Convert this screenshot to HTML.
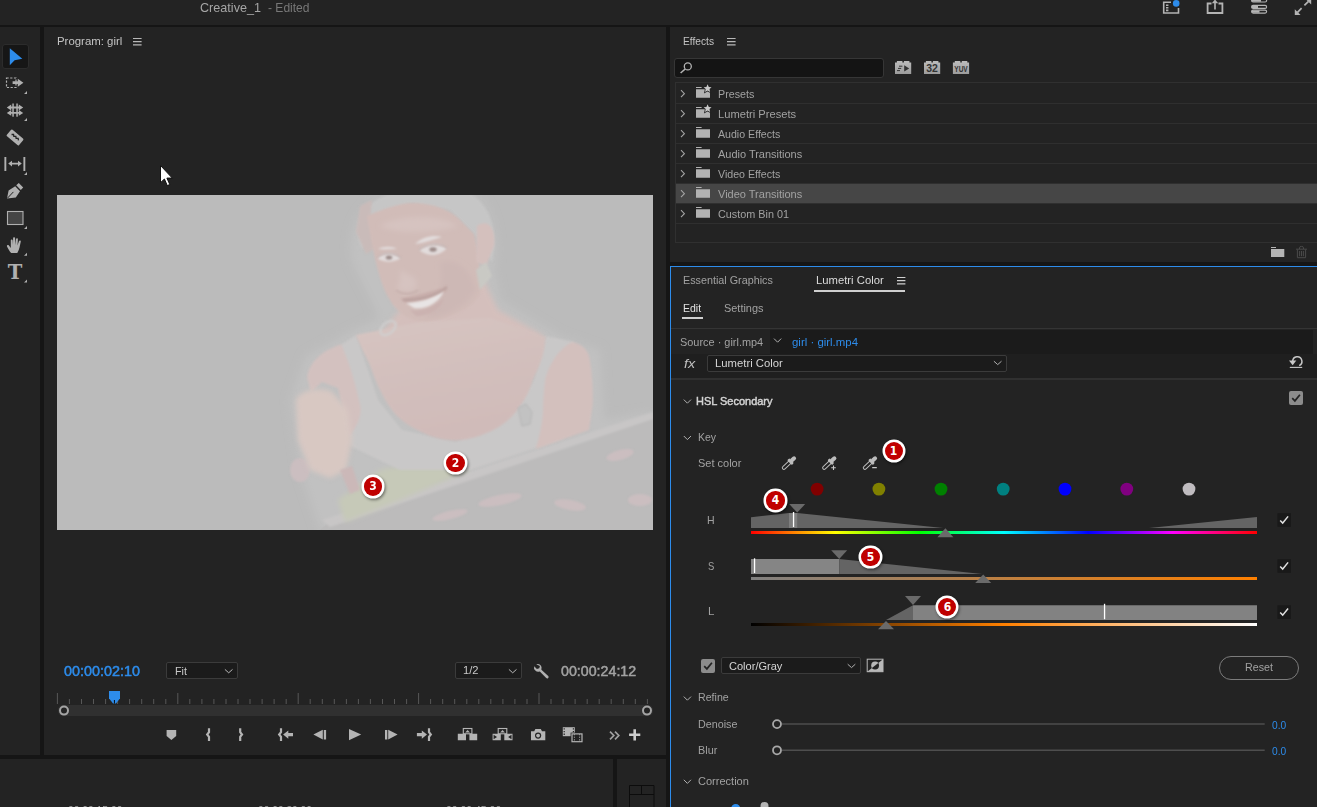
<!DOCTYPE html>
<html lang="en"><head><meta charset="utf-8"><title>Premiere Pro - Lumetri Color</title>
<style>
html,body{margin:0;padding:0;background:#232323;}
body{width:1317px;height:807px;overflow:hidden;font-family:"Liberation Sans",sans-serif;}
#app{position:relative;width:1317px;height:807px;overflow:hidden;background:#232323;}
#app div,#app svg{position:absolute;}
.t{position:absolute;line-height:1;white-space:nowrap;transform-origin:0 50%;display:block;}
.dk{background:#151515;}
.row{left:676px;width:641px;height:1px;background:#2f2f2f;}
.chk{width:14px;height:14px;border-radius:2px;background:#8c8c8c;}
.chk2{width:14px;height:14px;background:#191919;}
.dd{background:#1b1b1b;border:1px solid #3b3b3b;border-radius:2px;box-sizing:border-box;}
.badge{width:18.200px;height:18.200px;border-radius:50%;background:#c00000;margin:-9.100px 0 0 -9.100px;color:#fff;font-weight:bold;font-family:"DejaVu Sans Condensed","DejaVu Sans",sans-serif;font-size:12px;line-height:18px;text-align:center;box-shadow:0 0 0 2.500px #fff,1px 1.500px 3px 2.500px rgba(0,0,0,.45);}
.dot{width:13px;height:13px;border-radius:50%;top:482.5px;}

</style></head>
<body>
<div id="app">
<!-- structural dividers -->
<div class="dk" style="left:0;top:25px;width:1317px;height:2px"></div>
<div class="dk" style="left:40px;top:27px;width:4px;height:730px"></div>
<div class="dk" style="left:666px;top:27px;width:4px;height:780px"></div>
<div class="dk" style="left:0;top:755px;width:670px;height:4px"></div>
<div class="dk" style="left:613px;top:759px;width:4px;height:48px"></div>
<div class="dk" style="left:670px;top:262px;width:647px;height:4px"></div>
<!-- lumetri active border -->
<div style="left:670px;top:266px;width:647px;height:1px;background:#2d8ceb"></div>
<div style="left:670px;top:266px;width:1px;height:541px;background:#2d8ceb"></div>
<!-- ===== top bar icons ===== -->
<svg style="left:1160px;top:0" width="157" height="25" viewBox="1160 0 157 25">
  <g fill="none" stroke="#b4b4b4" stroke-width="1.600">
    <path d="M1171 2.200H1163.700V13H1178.500V8"/>
    <path d="M1166 5.2h2.4M1166 7.8h2.4M1166 10.4h2.4" stroke-width="1.6"/>
    <path d="M1211.500 3.500H1207.600V13H1222.400V3.500H1218.500" stroke-width="1.800"/>
    <path d="M1215 9.5V1" stroke-width="1.6"/>
  </g>
  <path d="M1211.8 3.2L1215 -0.5L1218.2 3.2Z" fill="#b4b4b4"/>
  <circle cx="1176.2" cy="3.4" r="3.3" fill="#2d8ceb"/>
  <g fill="none" stroke="#b4b4b4" stroke-width="1.2">
    <rect x="1251.6" y="-1" width="15" height="3" rx="1.5"/>
    <rect x="1251.600" y="5.400" width="15" height="3" rx="1.500"/>
    <rect x="1251.600" y="10.100" width="15" height="3" rx="1.500"/>
  </g>
  <path d="M1252 0.500h9M1252 6.900h6M1252 11.600h7.500" stroke="#b4b4b4" stroke-width="2.400"/>
  <path d="M1297.500 12.300L1301.600 8.200M1304.400 5.400L1308.500 1.300" stroke="#b4b4b4" stroke-width="1.700"/>
  <path d="M1294.8 15V9.2L1300.6 15ZM1311.2 -1.2V4.6L1305.4 -1.2Z" fill="#b4b4b4"/>
</svg>
<!-- ===== effects panel ===== -->
<svg style="left:133px;top:37px" width="9" height="9"><path d="M0 1.5h8.6M0 4.7h8.6M0 7.9h8.6" stroke="#b8b8b8" stroke-width="1.2"/></svg>
<svg style="left:726.6px;top:37px" width="9" height="9"><path d="M0 1.5h8.6M0 4.7h8.6M0 7.9h8.6" stroke="#b8b8b8" stroke-width="1.2"/></svg>
<div style="left:674px;top:58px;width:210px;height:20px;box-sizing:border-box;background:#141414;border:1px solid #363636;border-radius:3px"></div>
<svg style="left:678px;top:60px" width="16" height="16" viewBox="678 60 16 16"><circle cx="687.8" cy="66.4" r="3.5" fill="none" stroke="#b4b4b4" stroke-width="1.3"/><path d="M685.2 69L680.6 73" stroke="#b4b4b4" stroke-width="1.6"/></svg>
<svg style="left:892px;top:58px" width="80" height="18" viewBox="892 58 80 18">
  <defs><linearGradient id="lg" x1="0" y1="0" x2="0" y2="1"><stop offset="0" stop-color="#bcbcbc"/><stop offset="1" stop-color="#9c9c9c"/></linearGradient></defs>
  <g fill="url(#lg)">
    <path d="M895 62.6h1.9v-1.6h5.5v1.6h1.5v-1.6h5.5v1.6h1.8v11.4h-16.2z"/>
    <path d="M924 62.6h1.9v-1.6h5.5v1.6h1.5v-1.6h5.5v1.6h1.8v11.4h-16.2z"/>
    <path d="M952.9 62.6h1.9v-1.6h5.5v1.6h1.5v-1.6h5.5v1.6h1.8v11.4h-16.2z"/>
  </g>
  <path d="M904.2 65.2v6.4l5-3.2z" fill="#333"/>
  <path d="M899 66.2h3.4M898 68.4h3.2M897 70.6h3" stroke="#333" stroke-width="1"/>
  <text x="932" y="72.400" font-family="Liberation Sans, sans-serif" font-weight="bold" font-size="10.500" fill="#333" text-anchor="middle">32</text>
  <text x="961" y="72.2" font-family="Liberation Sans, sans-serif" font-weight="bold" font-size="8.5" fill="#333" text-anchor="middle" textLength="13.5" lengthAdjust="spacingAndGlyphs">YUV</text>
</svg>
<div style="left:675px;top:82px;width:642px;height:161px;box-sizing:border-box;border:1px solid #303030;border-right:0"></div>
<div style="left:676px;top:184px;width:641px;height:19px;background:#464646"></div>
<div class="row" style="top:183px"></div><div class="row" style="top:203px"></div>
<div class="row" style="top:103px"></div><div class="row" style="top:123px"></div><div class="row" style="top:143px"></div>
<div class="row" style="top:163px"></div><div class="row" style="top:223px"></div>
<svg style="left:676px;top:83px" width="40" height="140" viewBox="676 83 40 140">
  <defs>
    <g id="chev"><path d="M681 90.2L684.4 93.7L681 97.2" fill="none" stroke="#a4a4a4" stroke-width="1.1"/></g>
    <g id="fold"><path d="M696 87h5.6v1h-5.6zM696 89.3h14v8.5h-14z" fill="#b2b2b2"/></g>
    <g id="star"><path d="M707.6 84.3l1.2 2.6 2.8.3-2.1 1.9.6 2.8-2.5-1.4-2.5 1.4.6-2.8-2.1-1.9 2.8-.3z" fill="#c8c8c8" stroke="#232323" stroke-width="1.6" paint-order="stroke"/></g>
  </defs>
  <use href="#chev"/><use href="#chev" y="20"/><use href="#chev" y="40"/><use href="#chev" y="60"/><use href="#chev" y="80"/><use href="#chev" y="100"/><use href="#chev" y="120"/>
  <use href="#fold"/><use href="#fold" y="20"/><use href="#fold" y="40"/><use href="#fold" y="60"/><use href="#fold" y="80"/><use href="#fold" y="100"/><use href="#fold" y="120"/>
  <use href="#star"/><use href="#star" y="20"/>
</svg>
<svg style="left:1268px;top:244px" width="42" height="16" viewBox="1268 244 42 16">
  <path d="M1271 246.9h5v1h-5zM1271 249.1h13.3v8h-13.3z" fill="#b4b4b4"/>
  <g fill="none" stroke="#4a4a4a" stroke-width="1"><path d="M1296 249.2h11M1299.5 249v-1.2q0-1.4 2-1.4t2 1.4v1.2M1297.4 249.5v8.2h8.2v-8.2M1299.6 251v5.2M1301.5 251v5.2M1303.4 251v5.2"/></g>
</svg>
<!-- ===== tools ===== -->
<div style="left:1.5px;top:43.5px;width:27px;height:25px;box-sizing:border-box;background:#161616;border:1px solid #2c2c2c;border-radius:3px"></div>
<svg style="left:0;top:40px" width="40" height="250" viewBox="0 40 40 250">
  <path d="M9.8 48.2L22.3 58.7L14.6 60.2L9.8 65.2Z" fill="#2d8ceb"/>
  <g fill="#b0b0b0">
    <!-- track select -->
    <path d="M12.6 81.3h5.2v-2.6l5.6 4-5.6 4v-2.6h-5.2z"/>
    <path d="M27 91v3h-3zM27 118v3h-3zM27 172v3h-3zM27 226v3h-3zM27 252.700v3h-3zM27 279.500v3h-3z"/>
    <!-- ripple -->
    <path d="M6.800 107.500l4.400-2.900v2h7.600v-2l4.400 2.900-4.400 2.900v-2h-7.600v2zM6.800 112.900l4.400-2.900v2h7.600v-2l4.400 2.900-4.400 2.900v-2h-7.600v2z"/>
    <rect x="12.300" y="103.500" width="1.500" height="13.200"/><rect x="16.300" y="103.500" width="1.500" height="13.200"/>
    <!-- razor -->
    <g transform="translate(15 137.4) rotate(40)"><rect x="-8" y="-4.3" width="16" height="8.6" rx="1.2"/><path d="M-4.5 0l1.5-1.3 1.5 1.3 1.5-1.3 1.5 1.3 1.5-1.3 1.5 1.3" fill="none" stroke="#232323" stroke-width="1.3"/></g>
    <!-- slip -->
    <rect x="4.400" y="157" width="1.900" height="14"/><rect x="23.400" y="157" width="1.900" height="14"/>
    <path d="M8.2 163.6l3.8-2.9v2.1h6v-2.1l3.8 2.9-3.8 2.9v-2.1h-6v2.1z"/>
    <!-- pen -->
    <path d="M7 198.6l1.6-8.2 6.6-4.2 4.8 5-4.2 6.2zM16.2 185.2l2.6-2.2 4.4 4.4-2.4 2.6z"/>
    <!-- hand -->
    <path d="M11.2 253c-1.6-1.8-3-4.2-4.2-6.6-.5-1.2 1-2 1.9-.9l1.9 2.4v-7.400c0-1.300 1.800-1.300 1.900 0l.3 4.600.1-6.900c0-1.300 1.900-1.300 2 0l.2 6.900.7-6c.2-1.300 2-1.100 1.900.200l-.4 6.300 1.500-4.500c.4-1.200 2.100-.7 1.800.5l-1.300 6c-.4 2-1.200 3.800-2.200 5.400z"/>
  </g>
  <path d="M7.400 198.2l6-6.300" stroke="#232323" stroke-width="1" fill="none"/>
  <rect x="6.500" y="78" width="9.500" height="9.500" fill="none" stroke="#b0b0b0" stroke-width="1.200" stroke-dasharray="2.200 1.500"/>
  <rect x="7.500" y="211.500" width="15.500" height="13" fill="#454545" stroke="#b0b0b0" stroke-width="1.100"/>
  <text x="15" y="279" text-anchor="middle" font-family="DejaVu Serif, Liberation Serif, serif" font-weight="bold" font-size="19.600" fill="#b0b0b0">T</text>
</svg>
<!-- ===== program monitor controls ===== -->
<div class="dd" style="left:166px;top:662px;width:72px;height:17px"></div>
<div class="dd" style="left:455px;top:662px;width:67px;height:17px"></div>
<svg style="left:50px;top:660px" width="610" height="90" viewBox="50 660 610 90">
  <g fill="none" stroke="#b8b8b8" stroke-width="1"><path d="M224.900 669.400l3.800 3.400 3.800-3.400M508.900 669.400l3.800 3.400 3.800-3.400"/></g>
  <!-- wrench -->
  <path d="M536.200 664.200a4.200 4.200 0 0 1 5.200 5.600l6.800 6.200a1.400 1.400 0 0 1-2 2l-6.400-6.600a4.200 4.200 0 0 1-5.600-5.200l2.700 2.700 2.400-.6.600-2.400z" fill="#b0b0b0"/>
  <!-- ruler -->
  <path d="M57.4 693v11M69.4 699v5M81.5 699v5M93.5 699v5M105.6 699v5M117.6 699v5M129.6 699v5M141.7 699v5M153.7 699v5M165.8 699v5M177.8 693v11M189.8 699v5M201.9 699v5M213.9 699v5M226.0 699v5M238.0 699v5M250.0 699v5M262.1 699v5M274.1 699v5M286.2 699v5M298.2 693v11M310.2 699v5M322.3 699v5M334.3 699v5M346.4 699v5M358.4 699v5M370.4 699v5M382.5 699v5M394.5 699v5M406.6 699v5M418.6 693v11M430.6 699v5M442.7 699v5M454.7 699v5M466.8 699v5M478.8 699v5M490.8 699v5M502.9 699v5M514.9 699v5M527.0 699v5M539.0 693v11M551.0 699v5M563.1 699v5M575.1 699v5M587.2 699v5M599.2 699v5M611.2 699v5M623.3 699v5M635.3 699v5M647.4 699v5" stroke="#585858" stroke-width="1" fill="none"/>
  <rect x="58" y="705" width="595" height="11" rx="5" fill="#303030"/>
  <circle cx="64" cy="710.600" r="4" fill="#232323" stroke="#a4a4a4" stroke-width="2"/>
  <circle cx="647" cy="710.600" r="4" fill="#232323" stroke="#a4a4a4" stroke-width="2"/>
  <path d="M109 691h11v7.200l-4 5.200h-3l-4-5.200z" fill="#2d8ceb"/>
  <path d="M114.400 700v3.600" stroke="#0a0a0a" stroke-width="1"/>
  <!-- transport -->
  <g fill="#b4b4b4">
    <path d="M166.600 730h9.600v6l-4.800 4-4.800-4z"/>
    <path d="M313.400 734.600l9.400-4.800v9.600zM323.800 730h2.300v9.400h-2.300z"/>
    <path d="M349 729l12.200 5.600-12.200 5.600z"/>
    <path d="M385 730h2.300v9.400h-2.300zM388.200 729.800l9.400 4.800-9.400 4.800z"/>
    <path d="M283.100 734.600l5.200-4.200v2.600h4.700v3.200h-4.700v2.600z"/>
    <path d="M427 734.600l-5.200-4.200v2.600h-4.900v3.200h4.900v2.600z"/>
    <!-- lift -->
    <path d="M457.800 733.800h8.200v6.400h-8.200zM469.400 733.800h7.800v6.400h-7.800z"/>
    <path d="M465.200 732.600l2.400-2.600 2.400 2.600z"/>
    <!-- extract -->
    <path d="M492.600 733.800h8.200v6.400h-8.200zM504.300 733.800h8.200v6.400h-8.200z"/>
    <path d="M500.100 732.600l2.400-2.600 2.400 2.600z"/>
    <!-- camera -->
    <path d="M531 731.200h3.200l1.200-2.200h5.400l1.200 2.200h3.300v9h-14.300z"/>
    <!-- multi-cam -->
    <path d="M562.800 727.200h12v9h-12z"/>
    <!-- plus -->
    <path d="M633.400 729.200h2.600v4.300h4.300v2.600h-4.300v4.300h-2.600v-4.300h-4.300v-2.600h4.300z" fill="#cccccc"/>
  </g>
  <g fill="#232323">
    <path d="M493.600 734.800l3.400 2.200-3.400 2.200zM511.500 734.800l-3.400 2.200 3.400 2.200z"/>
    <circle cx="538.100" cy="735.600" r="3.100"/>
    <path d="M563.600 728.200h1.200v1.400h-1.200zM563.600 730.900h1.200v1.400h-1.200zM563.600 733.600h1.200v1.400h-1.200zM572.800 728.200h1.200v1.400h-1.200zM572.800 730.900h1.200v1.400h-1.200zM572.800 733.600h1.200v1.400h-1.200z"/>
    <rect x="570.600" y="732.600" width="12.600" height="10.200"/>
  </g>
  <circle cx="538.100" cy="735.600" r="1.900" fill="#b4b4b4"/>
  <g fill="none" stroke="#b4b4b4">
    <rect x="463.300" y="728.500" width="8.600" height="5.300" stroke-width="1.100"/>
    <rect x="498.200" y="728.500" width="8.600" height="5.300" stroke-width="1.100"/>
    <rect x="572" y="733.900" width="10" height="7.800" stroke-width="1.200"/>
    <path d="M574.400 734v7.600M579.600 734v7.600" stroke-width="0.800" stroke-dasharray="1.300 1.300"/>
    <path d="M209 728.200V732.200L207.200 734.500L209 736.800V740.900M240.200 728.200V732.200L242 734.500L240.200 736.800V740.900M281 728.200V732.200L279.200 734.500L281 736.800V740.900M429 728.200V732.200L430.800 734.500L429 736.800V740.900" stroke-width="2.200" stroke-linejoin="miter"/>
    <path d="M610 731.700l3.800 3.800-3.800 3.800M615 731.700l3.800 3.800-3.800 3.800" stroke="#a0a0a0" stroke-width="1.700"/>
  </g>
</svg>
<!-- timeline corner icon -->
<svg style="left:625px;top:780px" width="34" height="27" viewBox="625 780 34 27"><path d="M629.500 807v-21.500h24.500v21.500M629.500 794.500h24.500M641.500 785.500v9" fill="none" stroke="#0c0c0c" stroke-width="1"/></svg>
<!-- ===== lumetri panel ===== -->
<svg style="left:896.8px;top:276px" width="9" height="9"><path d="M0 1.5h8.4M0 4.7h8.4M0 7.900h8.400" stroke="#d0d0d0" stroke-width="1.200"/></svg>
<div style="left:814px;top:290px;width:91px;height:2px;background:#cfcfcf"></div>
<div style="left:682px;top:317px;width:21px;height:2px;background:#cfcfcf"></div>
<div style="left:671px;top:328px;width:646px;height:1px;background:#343434"></div>
<div style="left:770px;top:330px;width:543px;height:24px;background:#1b1b1b"></div>
<div style="left:671px;top:354px;width:646px;height:24px;background:#1f1f1f"></div>
<div style="left:671px;top:378px;width:646px;height:2px;background:#303030"></div>
<div class="dd" style="left:707px;top:354.500px;width:300px;height:17.500px"></div>
<div class="dd" style="left:721.400px;top:657px;width:140px;height:17px"></div>
<svg style="left:671px;top:330px" width="646" height="477" viewBox="671 330 646 477">
  <g fill="none" stroke="#b0b0b0" stroke-width="1">
    <path d="M774 338.600l3.600 3.600 3.600-3.600"/>
    <path d="M993.900 361.200l3.800 3.400 3.800-3.400"/>
    <path d="M683.800 399.600l3.600 3.600 3.600-3.600"/>
    <path d="M683.800 436l3.600 3.600 3.600-3.600"/>
    <path d="M847.700 664.200l3.800 3.400 3.800-3.400"/>
    <path d="M683.800 696.600l3.600 3.600 3.600-3.600"/>
    <path d="M683.800 779.800l3.600 3.600 3.600-3.600"/>
  </g>
  <!-- reset icon -->
  <path d="M1292.700 361.300A4.600 4.600 0 1 1 1299.200 365.600" fill="none" stroke="#c8c8c8" stroke-width="1.500"/>
  <path d="M1289.800 367.400H1302.200" fill="none" stroke="#c8c8c8" stroke-width="1.100"/>
  <path d="M1289 360.400h7.300l-3.650 4.900z" fill="#c8c8c8"/>
  <!-- checkboxes -->
  <rect x="1289" y="391" width="14" height="14" rx="2" fill="#8c8c8c"/>
  <path d="M1292.200 398.200l2.700 2.700 5-6.200" fill="none" stroke="#232323" stroke-width="1.700"/>
  <rect x="701" y="659" width="14" height="14" rx="2" fill="#8c8c8c"/>
  <path d="M704.200 666.200l2.700 2.700 5-6.200" fill="none" stroke="#232323" stroke-width="1.700"/>
  <g fill="#191919"><rect x="1277.400" y="513.200" width="13.600" height="13.600"/><rect x="1277.400" y="559.200" width="13.600" height="13.600"/><rect x="1277.400" y="605.300" width="13.600" height="13.600"/></g>
  <g fill="none" stroke="#e0e0e0" stroke-width="1.500"><path d="M1280.200 520.400l2.500 2.600 5.400-6.600M1280.200 566.400l2.500 2.600 5.400-6.600M1280.200 612.500l2.500 2.600 5.400-6.600"/></g>
  <!-- eyedroppers -->
  <defs>
    <g id="eye"><g transform="translate(782.400 469.200) rotate(-43)">
      <rect x="0.500" y="-1.600" width="10.500" height="3.200" rx="1.600" fill="none" stroke="#bcbcbc" stroke-width="1"/>
      <rect x="9.600" y="-3.300" width="3" height="6.600" rx="1" fill="#bcbcbc"/>
      <rect x="11" y="-2" width="7" height="4" rx="2" fill="#bcbcbc"/>
    </g></g>
  </defs>
  <use href="#eye"/><use href="#eye" x="40.300"/><use href="#eye" x="81"/>
  <path d="M831.200 467.800h4.600M833.500 465.500v4.600M872.200 467.600h4.600" stroke="#c8c8c8" stroke-width="1.100" fill="none"/>
  <!-- colour dots -->
  <circle cx="817.100" cy="489.100" r="6.400" fill="#800000"/><circle cx="878.900" cy="489.100" r="6.400" fill="#808000"/>
  <circle cx="941" cy="489.100" r="6.400" fill="#008000"/><circle cx="1003.200" cy="489.100" r="6.400" fill="#008080"/>
  <circle cx="1065" cy="489.100" r="6.400" fill="#0000fe"/><circle cx="1126.800" cy="489.100" r="6.400" fill="#800080"/>
  <circle cx="1189" cy="489.100" r="6.400" fill="#c0bcc0"/>
  <!-- H -->
  <defs>
    <linearGradient id="hue" x1="0" x2="1"><stop offset="0" stop-color="#ff0000"/><stop offset=".1667" stop-color="#ffff00"/><stop offset=".3333" stop-color="#00ff00"/><stop offset=".5" stop-color="#00ffff"/><stop offset=".6667" stop-color="#0000ff"/><stop offset=".8333" stop-color="#ff00ff"/><stop offset="1" stop-color="#ff0000"/></linearGradient>
    <linearGradient id="sat" x1="0" x2="1"><stop offset="0" stop-color="#808080"/><stop offset="1" stop-color="#ff8000"/></linearGradient>
    <linearGradient id="lum" x1="0" x2="1"><stop offset="0" stop-color="#000000"/><stop offset=".5" stop-color="#ff8000"/><stop offset="1" stop-color="#ffffff"/></linearGradient>
  </defs>
  <path d="M751 528v-10.700l38-4.200h8.200l146 14.900z" fill="#646464"/>
  <path d="M789 513.100h8.200v14.900h-8.200z" fill="#7e7e7e"/>
  <path d="M1149 528l108-11.100v11.100z" fill="#646464"/>
  <rect x="792.900" y="512" width="1.300" height="15" fill="#ffffff"/>
  <rect x="751" y="531" width="506" height="3" fill="url(#hue)"/>
  <path d="M789.200 504.100h16l-8 8.500z" fill="#6a6a6a"/>
  <path d="M937.400 537.300h16l-8-9.100z" fill="#6a6a6a"/>
  <!-- S -->
  <path d="M751 559h88.200v15h-88.200z" fill="#858585"/>
  <path d="M839.200 559l143 15h-143z" fill="#646464"/>
  <rect x="753.900" y="558.300" width="1.300" height="14.700" fill="#ffffff"/>
  <rect x="751" y="577" width="506" height="3" fill="url(#sat)"/>
  <path d="M831.200 550.300h16l-8 8.700z" fill="#6a6a6a"/>
  <path d="M975.200 582.900h16l-8-8.500z" fill="#6a6a6a"/>
  <!-- L -->
  <path d="M913 605.300h344v14.700h-344z" fill="#828282"/>
  <path d="M886 620l27-14.700v14.700z" fill="#646464"/>
  <rect x="1103.900" y="603.800" width="1.300" height="15.400" fill="#ffffff"/>
  <rect x="751" y="623" width="506" height="3" fill="url(#lum)"/>
  <path d="M905 596h16l-8 9z" fill="#6a6a6a"/>
  <path d="M878 629.300h16l-8-8.300z" fill="#6a6a6a"/>
  <!-- invert icon -->
  <defs><clipPath id="inv"><path d="M883 659.200v12.500h-15.800z"/></clipPath></defs>
  <circle cx="875.100" cy="665.500" r="3.900" fill="#b8b8b8"/>
  <path d="M883 659.200v12.500h-15.800z" fill="#b8b8b8"/>
  <circle cx="875.100" cy="665.500" r="3.900" fill="#232323" clip-path="url(#inv)"/>
  <rect x="867.200" y="659.200" width="15.800" height="12.500" fill="none" stroke="#b8b8b8" stroke-width="1"/>
  <!-- sliders -->
  <path d="M782 724h482.700M782 750.200h482.700" stroke="#4e4e4e" stroke-width="1.500"/>
  <circle cx="777" cy="724.100" r="4" fill="#232323" stroke="#a8a8a8" stroke-width="1.800"/>
  <circle cx="777" cy="750.300" r="4" fill="#232323" stroke="#a8a8a8" stroke-width="1.800"/>
  <circle cx="735.700" cy="808.500" r="4.500" fill="#2d8ceb"/>
  <circle cx="764.500" cy="806" r="4" fill="#b4b4b4"/>
</svg>
<div style="left:1219px;top:656px;width:80px;height:24px;box-sizing:border-box;border:1px solid #7c7c7c;border-radius:12px"></div>
<!-- ===== video frame ===== -->
<svg style="left:57px;top:195px" width="596" height="335" viewBox="57 195 596 335">
  <defs>
    <filter id="b1" x="-20%" y="-20%" width="140%" height="140%"><feGaussianBlur stdDeviation="1.200"/></filter>
    <filter id="b2" x="-20%" y="-20%" width="140%" height="140%"><feGaussianBlur stdDeviation="2.500"/></filter>
    <filter id="b4" x="-30%" y="-30%" width="160%" height="160%"><feGaussianBlur stdDeviation="5"/></filter>
    <clipPath id="vc"><rect x="57" y="195" width="596" height="335"/></clipPath>
  </defs>
  <rect x="57" y="195" width="596" height="335" fill="#bbbbbb"/>
  <g clip-path="url(#vc)">
    <!-- light halo around subject (white top / hair) -->
    <path d="M352 262C346 228 362 196 400 190L470 190C494 204 500 240 494 270L500 300L560 336L600 350L604 420L653 412V530H320L300 470L290 400L306 356L350 332L380 318Z" fill="#c1c1c1" filter="url(#b4)"/>
    <!-- table surface -->
    <path d="M327 524L653 418V530H320Z" fill="#bcbbbb"/>
    <path d="M322 520L653 412V419L330 527Z" fill="#c8c6c6" filter="url(#b1)"/>
    <!-- paper with yellow-green tint -->
    <path d="M338 500L380 470L440 458L470 470L400 500L345 522Z" fill="#c6c9b8" filter="url(#b2)"/>
    <!-- pink flecks on table -->
    <g fill="#cbbec0" filter="url(#b1)">
      <ellipse cx="500" cy="500" rx="22" ry="5" transform="rotate(-12 500 500)"/>
      <ellipse cx="570" cy="505" rx="16" ry="5" transform="rotate(10 570 505)"/>
      <ellipse cx="620" cy="455" rx="14" ry="5" transform="rotate(-15 620 455)"/>
      <ellipse cx="640" cy="500" rx="12" ry="6"/>
      <ellipse cx="450" cy="515" rx="18" ry="4" transform="rotate(-14 450 515)"/>
      <ellipse cx="300" cy="470" rx="10" ry="12"/>
    </g>
    <!-- tank top -->
    <path d="M341 345L356 335L378 400L402 430L456 442L512 414L534 380L546 336L574 342L590 420L560 440L470 470L400 470L350 446Z" fill="#c9c8c8" filter="url(#b1)"/>
    <!-- left shoulder / arm -->
    <path d="M341.300 344.600C322 350 308 364 307.300 378L311 392L322 382L338 388L348.600 437C356 428 361 418 360.700 407.700C356 386 350 364 341.300 344.600Z" fill="#d3c1bf" filter="url(#b1)"/>
    <!-- right arm -->
    <path d="M572.100 342C582 344 588 350 589.500 358C592 372 593 388 592.800 403L589 430L535.700 449C540 436 542 424 543 412.600C543 400 544 390 545.400 378.600C550 362 560 348 572.100 342Z" fill="#d3c0bd" filter="url(#b1)"/>
    <!-- neck -->
    <path d="M398 312L478 268L498 310L546 337L460 352L378 338Z" fill="#d4bfbc" filter="url(#b2)"/>
    <!-- chest -->
    <linearGradient id="chg" x1="0" y1="0" x2="0.300" y2="1"><stop offset="0" stop-color="#d6c5c2"/><stop offset="0.450" stop-color="#d3c0bd"/><stop offset="1" stop-color="#d0bbb9"/></linearGradient>
    <path d="M355.900 335L420 322L490 318L545.400 337C545 352 540 366 533.200 378.600C530 390 525 400 518.700 407.700C512 418 504 424 494.400 429.600C482 436 468 440 455.500 440.500C440 440 428 436 416.600 429.600C406 424 398 418 392.300 410.200C382 396 376 382 370.500 366.400C366 356 360 346 355.900 335Z" fill="url(#chg)" filter="url(#b1)"/>
    <!-- hand -->
    <path d="M296 400C300 390 320 386 332 392L348 410L352 440L346 470L330 478L310 470L298 440Z" fill="#d8c8c2" filter="url(#b2)"/>
    <path d="M340 470L352 466L360 490L350 494Z" fill="#cbb8b8" filter="url(#b1)"/>
    <!-- hair (lighter) -->
    <path d="M362 250C350 226 362 198 400 192L468 192C492 206 498 232 492 262L474 234L450 210L412 203L380 212Z" fill="#c6c6c6" filter="url(#b1)"/>
    <!-- reddish hair fringe -->
    <path d="M360 206L372 200L370 222L376 248L366 254L356 232Z" fill="#c9bbb9" filter="url(#b1)"/>
    <!-- face -->
    <path d="M367 216C380 210 400 203 412 203C432 203 452 210 462 222L474 234C478 250 482 276 480 294C470 312 440 322 418 321C404 318 394 308 390 300C380 284 374 258 367 216Z" fill="#d1bcb8" filter="url(#b1)"/>
    <!-- ear -->
    <path d="M477 226C488 218 496 228 494 246L486 266L476 262Z" fill="#d4c0bd" filter="url(#b1)"/>
    <!-- face shading -->
    <path d="M440 262C456 258 470 268 476 290C464 308 444 318 424 318C436 306 444 290 440 262Z" fill="#cdb8b5" filter="url(#b2)"/>
    <path d="M380 226C400 214 440 214 458 226C440 232 400 236 380 226Z" fill="#d6c3c0" filter="url(#b2)"/>
    <!-- nose, lips -->
    <path d="M400 270C401 278 399 284 397 288C401 293 410 293 415 289C418 285 417 280 413 277Z" fill="#d6c3c0" filter="url(#b2)"/>
    <path d="M396 290C402 295 412 295 418 290" fill="none" stroke="#c4adaa" stroke-width="1.400" filter="url(#b1)"/>
    <path d="M400 299C412 296 432 292 447 286C448 290 446 292 444 293C434 298 418 302 406 303Z" fill="#c7adaa" filter="url(#b1)"/>
    <path d="M410 310C422 312 436 306 444 298C442 308 430 316 416 316Z" fill="#cbb2b0" filter="url(#b1)"/>
    <!-- eyes, brows, teeth -->
    <g fill="#e2dcdc" filter="url(#b1)">
      <path d="M377 258C383 251 394 251 401 258C393 263 384 263 377 258Z"/>
      <path d="M419 250C427 242 440 242 447 248C439 257 428 257 419 250Z"/>
      <path d="M415 244C424 236 434 235 442 237C432 240 424 243 415 244Z"/>
      <path d="M378 249C384 246 392 246 397 249C391 249 384 250 378 249Z"/>
      <path d="M406 303C420 303 434 298 444 291C440 302 426 310 414 308Z" fill="#e8e4e4"/>
    </g>
    <g fill="#9a8886" filter="url(#b1)">
      <ellipse cx="389" cy="257.500" rx="3.200" ry="2"/>
      <ellipse cx="433" cy="249.500" rx="3.600" ry="2.200"/>
    </g>
    <g fill="none" stroke="#a89290" stroke-width="0.900" filter="url(#b1)">
      <path d="M377 258C383 252 394 252 401 258M419 250C427 243 440 243 447 248"/>
      <path d="M403 300C420 300 436 296 447 287"/>
    </g>
    <!-- earring -->
    <path d="M476 270L486 262L492 276L480 290Z" fill="#c9c9c4" filter="url(#b1)"/>
    <!-- necklace ring -->
    <ellipse cx="388" cy="328" rx="9" ry="5.500" transform="rotate(-40 388 328)" fill="none" stroke="#d0d0d0" stroke-width="2" filter="url(#b1)"/>
    <!-- small dark badge on top -->
    <path d="M518 408l8-4 6 8-2 12-8 2z" fill="#c2c2c2" stroke="#b0b0b0" stroke-width="0.800" filter="url(#b1)"/>
  </g>
</svg>

<!-- ===== annotation badges ===== -->
<div class="badge" style="left:893.600px;top:450.800px">1</div>
<div class="badge" style="left:455.500px;top:463px">2</div>
<div class="badge" style="left:373px;top:486.500px">3</div>
<div class="badge" style="left:775.500px;top:500.500px">4</div>
<div class="badge" style="left:870.500px;top:556.600px">5</div>
<div class="badge" style="left:947.400px;top:606.700px">6</div>
<!-- mouse cursor -->
<svg style="left:158px;top:164px" width="16" height="24" viewBox="158 164 16 24"><path d="M160.500 165.500v17.200l3.900-3.700 2.900 6.600 2.500-1.100-2.900-6.400h5.400z" fill="#ffffff" stroke="#111111" stroke-width="1"/></svg>

<!-- text labels -->
<span class="t" style="left:199.5px;top:1.00px;font-size:13px;color:#a6a6a6;transform:scaleX(0.9702);">Creative_1</span>
<span class="t" style="left:268.0px;top:1.00px;font-size:13px;color:#787878;transform:scaleX(0.9261);">- Edited</span>
<span class="t" style="left:57.0px;top:36.00px;font-size:11px;color:#c4c4c4;transform:scaleX(1.0370);">Program: girl</span>
<span class="t" style="left:63.8px;top:664.00px;font-size:14px;color:#2d8ceb;-webkit-text-stroke:0.5px #2d8ceb;transform:scaleX(1.0275);">00:00:02:10</span>
<span class="t" style="left:174.6px;top:666.00px;font-size:11px;color:#c8c8c8;transform:scaleX(0.9808);">Fit</span>
<span class="t" style="left:462.7px;top:665.00px;font-size:11px;color:#c8c8c8;transform:scaleX(1.0198);">1/2</span>
<span class="t" style="left:560.5px;top:664.00px;font-size:14px;color:#a2a2a2;-webkit-text-stroke:0.5px #a2a2a2;transform:scaleX(1.0166);">00:00:24:12</span>
<span class="t" style="left:683.0px;top:36.00px;font-size:11px;color:#c4c4c4;transform:scaleX(0.9271);">Effects</span>
<span class="t" style="left:718.3px;top:89.00px;font-size:11px;color:#a2a2a2;transform:scaleX(0.9733);">Presets</span>
<span class="t" style="left:718.3px;top:109.00px;font-size:11px;color:#a2a2a2;transform:scaleX(1.0139);">Lumetri Presets</span>
<span class="t" style="left:718.3px;top:129.00px;font-size:11px;color:#a2a2a2;transform:scaleX(0.9640);">Audio Effects</span>
<span class="t" style="left:718.3px;top:149.00px;font-size:11px;color:#a2a2a2;transform:scaleX(0.9977);">Audio Transitions</span>
<span class="t" style="left:718.3px;top:169.00px;font-size:11px;color:#a2a2a2;transform:scaleX(0.9671);">Video Effects</span>
<span class="t" style="left:718.3px;top:189.00px;font-size:11px;color:#a2a2a2;transform:scaleX(1.0001);">Video Transitions</span>
<span class="t" style="left:718.3px;top:209.00px;font-size:11px;color:#a2a2a2;transform:scaleX(0.9840);">Custom Bin 01</span>
<span class="t" style="left:683.0px;top:275.00px;font-size:11px;color:#a2a2a2;transform:scaleX(0.9791);">Essential Graphics</span>
<span class="t" style="left:816.1px;top:275.00px;font-size:11px;color:#dcdcdc;transform:scaleX(1.0253);">Lumetri Color</span>
<span class="t" style="left:682.5px;top:303.00px;font-size:11px;color:#e2e2e2;transform:scaleX(0.9542);">Edit</span>
<span class="t" style="left:724.0px;top:303.00px;font-size:11px;color:#a2a2a2;transform:scaleX(0.9937);">Settings</span>
<span class="t" style="left:680.0px;top:337.00px;font-size:11px;color:#a2a2a2;transform:scaleX(0.9932);">Source · girl.mp4</span>
<span class="t" style="left:792.0px;top:337.00px;font-size:11px;color:#2d8ceb;transform:scaleX(1.0381);">girl · girl.mp4</span>
<span class="t" style="left:683.8px;top:357.00px;font-size:13px;color:#c0c0c0;font-style:italic;transform:scaleX(1.1062);">fx</span>
<span class="t" style="left:715.0px;top:358.00px;font-size:11px;color:#d4d4d4;transform:scaleX(1.0268);">Lumetri Color</span>
<span class="t" style="left:696.3px;top:396.00px;font-size:11px;color:#d4d4d4;-webkit-text-stroke:0.45px #d4d4d4;transform:scaleX(0.9982);">HSL Secondary</span>
<span class="t" style="left:698.3px;top:432.00px;font-size:11px;color:#a2a2a2;transform:scaleX(0.9542);">Key</span>
<span class="t" style="left:698.0px;top:458.00px;font-size:11px;color:#a2a2a2;transform:scaleX(0.9995);">Set color</span>
<span class="t" style="left:707.0px;top:515.00px;font-size:11px;color:#a2a2a2;transform:scaleX(0.9556);">H</span>
<span class="t" style="left:707.6px;top:561.00px;font-size:11px;color:#a2a2a2;transform:scaleX(0.8579);">S</span>
<span class="t" style="left:708.0px;top:606.00px;font-size:11px;color:#a2a2a2;transform:scaleX(1.0449);">L</span>
<span class="t" style="left:729.4px;top:661.00px;font-size:11px;color:#d4d4d4;transform:scaleX(1.0040);">Color/Gray</span>
<span class="t" style="left:1245.0px;top:662.00px;font-size:11px;color:#a2a2a2;transform:scaleX(0.9704);">Reset</span>
<span class="t" style="left:698.3px;top:692.00px;font-size:11px;color:#a2a2a2;transform:scaleX(0.9655);">Refine</span>
<span class="t" style="left:698.3px;top:719.00px;font-size:11px;color:#a2a2a2;transform:scaleX(0.9762);">Denoise</span>
<span class="t" style="left:698.3px;top:745.00px;font-size:11px;color:#a2a2a2;transform:scaleX(0.9866);">Blur</span>
<span class="t" style="left:698.3px;top:776.00px;font-size:11px;color:#a2a2a2;transform:scaleX(1.0030);">Correction</span>
<span class="t" style="left:1271.6px;top:720.00px;font-size:11px;color:#2d8ceb;transform:scaleX(0.9283);">0.0</span>
<span class="t" style="left:1271.6px;top:746.00px;font-size:11px;color:#2d8ceb;transform:scaleX(0.9283);">0.0</span>
<span class="t" style="left:68.4px;top:805.00px;font-size:11px;color:#a2a2a2;transform:scaleX(0.9359);">00:00:15:00</span>
<span class="t" style="left:258.0px;top:805.00px;font-size:11px;color:#a2a2a2;transform:scaleX(0.9290);">00:00:30:00</span>
<span class="t" style="left:446.4px;top:805.00px;font-size:11px;color:#a2a2a2;transform:scaleX(0.9497);">00:00:45:00</span>
</div>
</body></html>
